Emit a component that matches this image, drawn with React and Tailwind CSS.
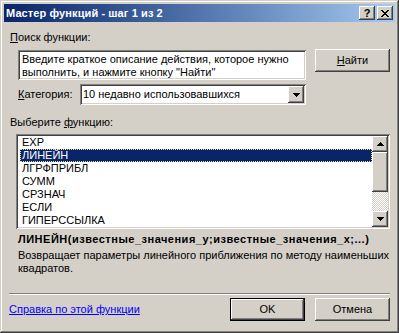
import React from 'react';

const raised =
  'shadow-[inset_-1px_-1px_#404040,inset_1px_1px_#ffffff,inset_-2px_-2px_#808080,inset_2px_2px_#d4d0c8]';
const sunken =
  'shadow-[inset_1px_1px_#808080,inset_-1px_-1px_#ffffff,inset_2px_2px_#404040,inset_-2px_-2px_#d4d0c8]';

function Arrow({ up }) {
  return (
    <svg width="7" height="4" viewBox="0 0 7 4" className="block">
      {up ? <path d="M3 0h1v1h1v1h1v1h1v1H0V3h1V2h1V1h1z" fill="#000" /> : <path d="M0 0h7v1H6v1H5v1H4v1H3V3H2V2H1V1H0z" fill="#000" />}
    </svg>
  );
}

function Btn({ children, isDefault }) {
  if (isDefault) {
    return (
      <div className="w-[75px] h-[23px] border border-black bg-[#d4d0c8]">
        <div className={`w-full h-full flex items-center justify-center ${raised}`}>{children}</div>
      </div>
    );
  }
  return (
    <div className={`w-[75px] h-[23px] flex items-center justify-center bg-[#d4d0c8] ${raised}`}>{children}</div>
  );
}

const funcs = ['EXP', 'ЛИНЕЙН', 'ЛГРФПРИБЛ', 'СУММ', 'СРЗНАЧ', 'ЕСЛИ', 'ГИПЕРССЫЛКА'];

export default function App() {
  return (
    <div
      className={`w-[399px] h-[333px] bg-[#d4d0c8] p-[4px] flex flex-col text-[11px] leading-[13px] text-black shadow-[inset_-1px_-1px_#404040,inset_1px_1px_#d4d0c8,inset_-2px_-2px_#808080,inset_2px_2px_#ffffff]`}
      style={{ fontFamily: '"Liberation Sans", Arial, sans-serif' }}
    >
      {/* Заголовок окна */}
      <div className="h-[18px] shrink-0 flex items-center justify-between bg-gradient-to-r from-[#0a246a] to-[#a6caf0] pl-[2px] pr-[2px]">
        <span className="font-bold text-white tracking-[0.1px]">Мастер функций - шаг 1 из 2</span>
        <div className="flex gap-[2px]">
          <div className={`w-[16px] h-[14px] bg-[#d4d0c8] flex items-center justify-center font-bold text-[11px] leading-none ${raised}`}>?</div>
          <div className={`w-[16px] h-[14px] bg-[#d4d0c8] flex items-center justify-center ${raised}`}>
            <svg width="8" height="7" viewBox="0 0 8 7" className="block">
              <path d="M0 0h2v1h1v1h2V1h1V0h2v1H7v1H6v1H5v1h1v1h1v1h1v1H6V6H5V5H3v1H2v1H0V6h1V5h1V4h1V3H2V2H1V1H0z" fill="#000" />
            </svg>
          </div>
        </div>
      </div>

      <div className="flex-1 flex flex-col px-[5px] pb-[8px]">
        <div className="mt-[9px] pl-[1px]">
          <u>П</u>оиск функции:
        </div>

        <div className="mt-[5px] ml-[9px] flex items-start gap-[9px]">
          <div className={`mt-[1px] w-[288px] h-[30px] bg-white pt-[3px] pl-[4px] ${sunken}`}>
            Введите краткое описание действия, которое нужно
            <br />
            выполнить, и нажмите кнопку "Найти"
          </div>
          <Btn>
            <span>
              <u>Н</u>айти
            </span>
          </Btn>
        </div>

        <div className="mt-[4px] ml-[9px] flex items-center">
          <div className="w-[62px]">
            <u>К</u>атегория:
          </div>
          <div className={`w-[226px] h-[21px] bg-white flex items-center justify-between p-[2px] ${sunken}`}>
            <span className="pl-[1px]">10 недавно использовавшихся</span>
            <div className={`w-[16px] h-[17px] bg-[#d4d0c8] flex items-center justify-center ${raised}`}>
              <Arrow />
            </div>
          </div>
        </div>

        <div className="mt-[11px] pl-[1px]">
          Выберите <u>ф</u>ункцию:
        </div>

        <div className={`mt-[5px] ml-[7px] h-[95px] bg-white p-[2px] flex ${sunken}`}>
          <div className="flex-1 overflow-hidden">
            {funcs.map((f) => (
              <div
                key={f}
                className={`h-[13px] ml-[2px] pl-[1px] border ${
                  f === 'ЛИНЕЙН' ? 'bg-[#0a246a] text-white border-dotted border-[#e6dc8c]' : 'border-transparent'
                } flex items-center`}
              >
                {f}
              </div>
            ))}
          </div>
          <div className="w-[16px] flex flex-col">
            <div className={`h-[16px] bg-[#d4d0c8] flex items-center justify-center ${raised}`}>
              <Arrow up />
            </div>
            <div className={`h-[40px] bg-[#d4d0c8] ${raised}`} />
            <div className="flex-1 bg-[repeating-conic-gradient(#d4d0c8_0%_25%,#ffffff_0%_50%)] bg-[length:2px_2px]" />
            <div className={`h-[16px] bg-[#d4d0c8] flex items-center justify-center ${raised}`}>
              <Arrow />
            </div>
          </div>
        </div>

        <div className="mt-[4px] ml-[9px] font-bold tracking-[0.5px]">ЛИНЕЙН(известные_значения_y;известные_значения_x;...)</div>
        <div className="mt-[3px] ml-[9px]">
          Возвращает параметры линейного приближения по методу наименьших
          <br />
          квадратов.
        </div>

        <div className="flex-1" />
        <div className="h-[2px] border-t border-[#808080] border-b border-b-white" />

        <div className="mt-[3px] flex items-center justify-between">
          <a className="text-[#0000ff] underline">Справка по этой функции</a>
          <div className="flex gap-[10px]">
            <Btn isDefault>OK</Btn>
            <Btn>Отмена</Btn>
          </div>
        </div>
      </div>
    </div>
  );
}
